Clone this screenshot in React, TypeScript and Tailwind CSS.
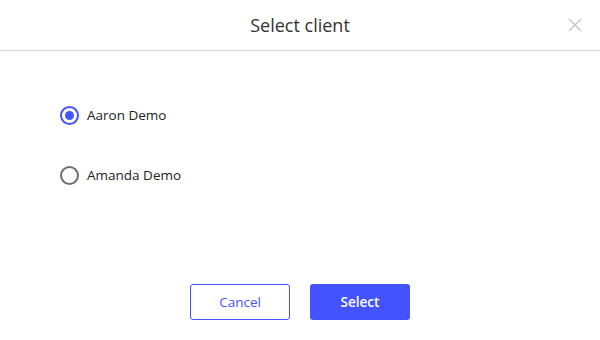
import { useState } from "react";

const clients = ["Aaron Demo", "Amanda Demo"];

export default function App() {
  const [selected, setSelected] = useState("Aaron Demo");

  return (
    <div className="w-[600px] h-[340px] bg-white flex flex-col text-[#222]" style={{ fontFamily: '"Open Sans", "Liberation Sans", sans-serif' }}>
      <div className="h-[51px] border-b border-[#d9d9d9] flex items-center justify-center relative shrink-0">
        <h2 className="text-[18px] text-[#333]">Select client</h2>
        <button className="absolute right-[17px] top-[17px] text-[#c8c8c8]">
          <svg width="16" height="16" viewBox="0 0 16 16" fill="none" stroke="currentColor" strokeWidth="1.6">
            <path d="M2 2l12 12M14 2L2 14" />
          </svg>
        </button>
      </div>

      <div className="flex flex-col gap-[38px] pl-[60px] pt-[53px]">
        {clients.map((c) => (
          <label key={c} className="flex items-center gap-[8px] cursor-pointer h-[22px]" onClick={() => setSelected(c)}>
            {selected === c ? (
              <span className="w-[19px] h-[19px] rounded-full border-2 border-[#4353ff] flex items-center justify-center">
                <span className="w-[9px] h-[9px] rounded-full bg-[#4353ff]" />
              </span>
            ) : (
              <span className="w-[19px] h-[19px] rounded-full border-2 border-[#6f6f6f]" />
            )}
            <span className="text-[13.5px] text-[#222]">{c}</span>
          </label>
        ))}
      </div>

      <div className="mt-auto mb-[20px] flex justify-center gap-[20px]">
        <button className="w-[100px] h-[36px] rounded-[3px] border border-[#4353ff] text-[#4353ff] text-[13.5px]">
          Cancel
        </button>
        <button className="w-[100px] h-[36px] rounded-[3px] bg-[#4353ff] text-white text-[13.5px] font-semibold">
          Select
        </button>
      </div>
    </div>
  );
}
